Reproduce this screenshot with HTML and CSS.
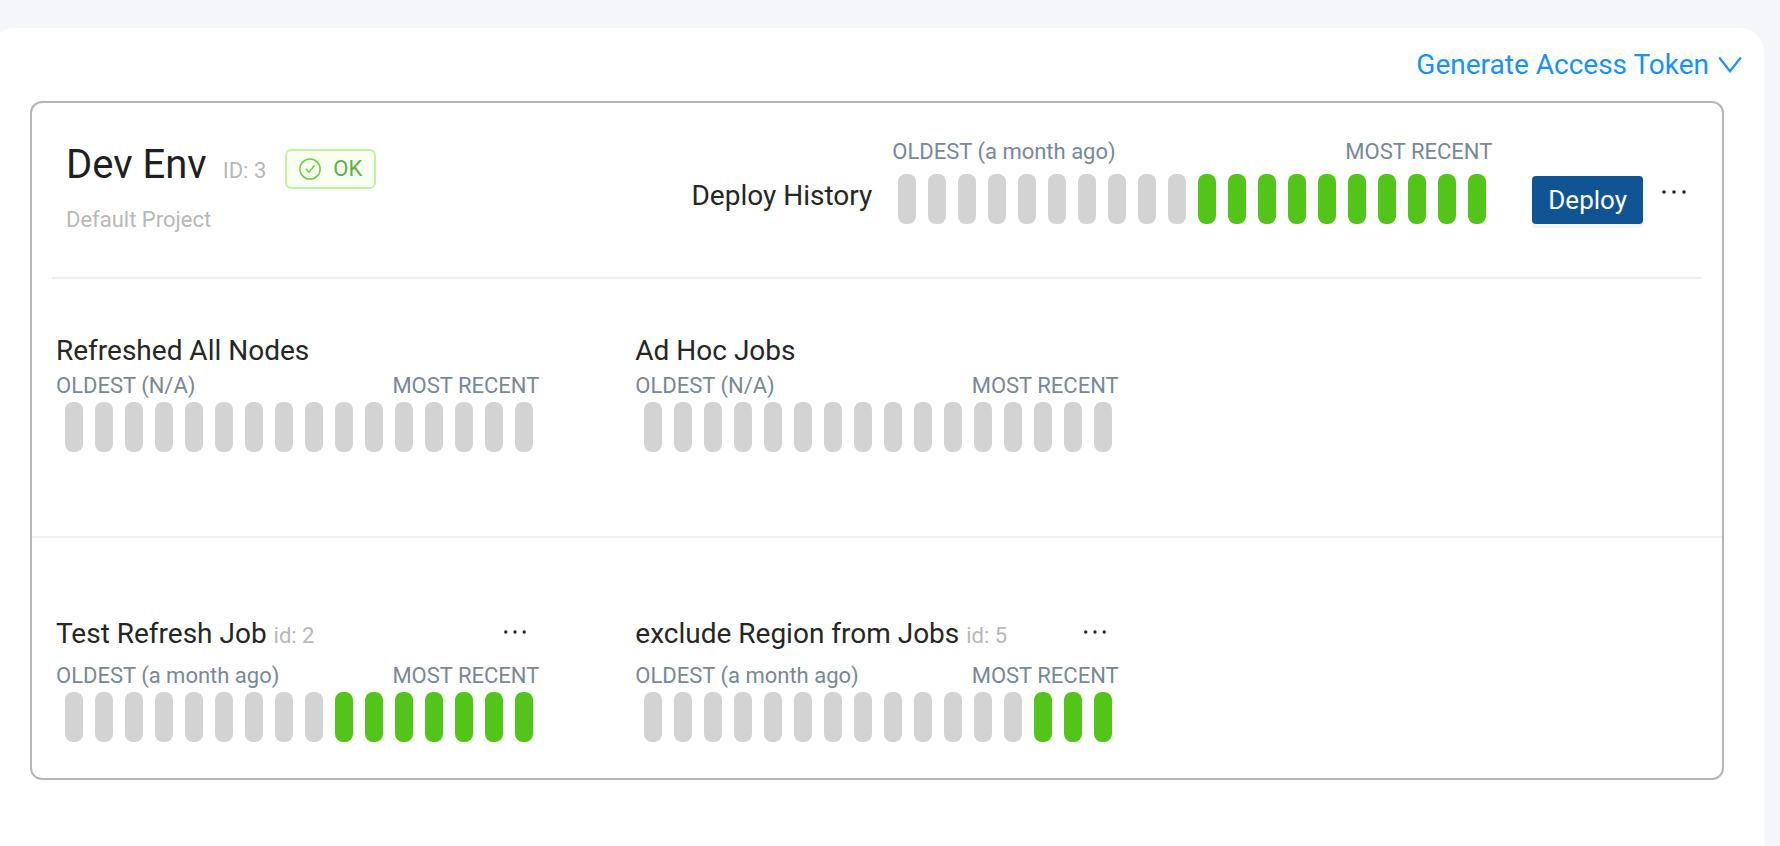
FILE: index.html
```html
<!DOCTYPE html>
<html lang="en">
<head>
<meta charset="utf-8">
<title>Environments</title>
<link rel="stylesheet" href="styles.css">
</head>
<body>
<main class="panel">
  <div class="toolbar">
    <button class="link-button" type="button">Generate Access Token
      <svg class="chevron" viewBox="0 0 24 16" aria-hidden="true"><path d="M1.2 0.5 12 14.2 22.8 0.5" /></svg>
    </button>
  </div>

  <section class="card">
    <header class="card-header">
      <div class="env">
        <div class="env-line">
          <div class="env-heading">
            <h1 class="env-name">Dev Env</h1>
            <span class="muted">ID: 3</span>
          </div>
          <span class="tag">
            <svg class="tag-icon" viewBox="0 0 22 22" aria-hidden="true"><circle cx="11" cy="11" r="10.1" /><path d="M6.9 10.7 10 14.4 15.4 7.2" /></svg>
            OK
          </span>
        </div>
        <p class="muted env-project">Default Project</p>
      </div>
      <div class="deploy">
        <h2 class="title deploy-title">Deploy History</h2>
        <div class="chart chart-wide">
          <div class="labels"><span>OLDEST (a month ago)</span><span>MOST RECENT</span></div>
          <div class="bars"><i></i><i></i><i></i><i></i><i></i><i></i><i></i><i></i><i></i><i></i><i class="ok"></i><i class="ok"></i><i class="ok"></i><i class="ok"></i><i class="ok"></i><i class="ok"></i><i class="ok"></i><i class="ok"></i><i class="ok"></i><i class="ok"></i></div>
        </div>
        <button class="primary" type="button">Deploy</button>
        <button class="more" type="button" aria-label="Environment actions"><svg viewBox="0 0 26 6" aria-hidden="true"><circle cx="3" cy="3" r="1.8" /><circle cx="13" cy="3" r="1.8" /><circle cx="23" cy="3" r="1.8" /></svg></button>
      </div>
    </header>

    <div class="jobs jobs-summary">
      <article class="job">
        <h2 class="title">Refreshed All Nodes</h2>
        <div class="chart">
          <div class="labels"><span>OLDEST (N/A)</span><span>MOST RECENT</span></div>
          <div class="bars"><i></i><i></i><i></i><i></i><i></i><i></i><i></i><i></i><i></i><i></i><i></i><i></i><i></i><i></i><i></i><i></i></div>
        </div>
      </article>
      <article class="job">
        <h2 class="title">Ad Hoc Jobs</h2>
        <div class="chart">
          <div class="labels"><span>OLDEST (N/A)</span><span>MOST RECENT</span></div>
          <div class="bars"><i></i><i></i><i></i><i></i><i></i><i></i><i></i><i></i><i></i><i></i><i></i><i></i><i></i><i></i><i></i><i></i></div>
        </div>
      </article>
    </div>

    <div class="jobs jobs-list">
      <article class="job">
        <div class="job-head">
          <h2 class="title">Test Refresh Job <span class="muted">id: 2</span></h2>
          <button class="more" type="button" aria-label="Test Refresh Job actions"><svg viewBox="0 0 26 6" aria-hidden="true"><circle cx="3" cy="3" r="1.8" /><circle cx="13" cy="3" r="1.8" /><circle cx="23" cy="3" r="1.8" /></svg></button>
        </div>
        <div class="chart">
          <div class="labels"><span>OLDEST (a month ago)</span><span>MOST RECENT</span></div>
          <div class="bars"><i></i><i></i><i></i><i></i><i></i><i></i><i></i><i></i><i></i><i class="ok"></i><i class="ok"></i><i class="ok"></i><i class="ok"></i><i class="ok"></i><i class="ok"></i><i class="ok"></i></div>
        </div>
      </article>
      <article class="job">
        <div class="job-head">
          <h2 class="title">exclude Region from Jobs <span class="muted">id: 5</span></h2>
          <button class="more" type="button" aria-label="exclude Region from Jobs actions"><svg viewBox="0 0 26 6" aria-hidden="true"><circle cx="3" cy="3" r="1.8" /><circle cx="13" cy="3" r="1.8" /><circle cx="23" cy="3" r="1.8" /></svg></button>
        </div>
        <div class="chart">
          <div class="labels"><span>OLDEST (a month ago)</span><span>MOST RECENT</span></div>
          <div class="bars"><i></i><i></i><i></i><i></i><i></i><i></i><i></i><i></i><i></i><i></i><i></i><i></i><i></i><i class="ok"></i><i class="ok"></i><i class="ok"></i></div>
        </div>
      </article>
    </div>
  </section>
</main>
</body>
</html>
```
FILE: styles.css
```css
* {
  box-sizing: border-box;
}

body {
  display: flex;
  min-height: 100vh;
  margin: 0;
  padding-top: 28px;
  overflow-x: hidden;
  background: #f4f6fa;
  color: #262626;
  font: 22px/28px Roboto, "Liberation Sans", sans-serif;
}

h1,
h2,
p {
  margin: 0;
  font-weight: 400;
}

button {
  padding: 0;
  border: 0;
  background: none;
  font: inherit;
  cursor: pointer;
}

.panel {
  flex: 1;
  min-width: 0;
  margin: 0 16px 0 -10px;
  padding: 19px 40px 40px;
  border-radius: 24px 24px 0 0;
  background: #fff;
}

.toolbar {
  display: flex;
  justify-content: flex-end;
  margin: 0 -18px 18px 0;
}

.link-button {
  display: flex;
  align-items: center;
  gap: 9px;
  color: #1890ff;
  font-size: 28px;
  line-height: 36px;
}

.chevron {
  width: 24px;
  height: 16px;
  fill: none;
  stroke: currentColor;
  stroke-width: 2.2;
}

.card {
  border: 2px solid #b5b5b5;
  border-radius: 12px;
}

.card-header {
  display: flex;
  justify-content: space-between;
  margin: 0 20px;
  padding: 35px 15px 43px 14px;
  border-bottom: 2px solid #f0f0f0;
}

.env {
  padding-top: 3px;
}

.env-line {
  display: flex;
  align-items: flex-end;
  gap: 19px;
}

.env-heading {
  display: flex;
  align-items: baseline;
  gap: 16px;
}

.env-name {
  color: #1f1f1f;
  font-size: 40px;
  line-height: 48px;
}

.muted {
  color: #b8b8b8;
  font-size: 22px;
}

.tag {
  display: flex;
  align-items: center;
  gap: 12px;
  padding: 4px 12px;
  border: 2px solid #c5f0a4;
  border-radius: 6px;
  background: #f8fff0;
  color: #62ad4a;
}

.tag-icon {
  width: 22px;
  height: 22px;
  fill: none;
  stroke: #6dcf43;
  stroke-width: 1.5;
}

.env-project {
  margin-top: 17px;
}

.title {
  font-size: 28px;
  line-height: 36px;
}

.deploy {
  display: flex;
  align-items: flex-start;
}

.deploy-title {
  margin: 40px 20px 0 0;
}

.chart {
  display: flex;
  flex-direction: column;
  gap: 2px;
}

.chart-wide {
  width: 600px;
  gap: 8px;
}

.labels {
  display: flex;
  justify-content: space-between;
  color: #778899;
}

.bars {
  display: flex;
  gap: 12px;
  padding-left: 9px;
}

.chart-wide .bars {
  padding-left: 6px;
}

.bars i {
  width: 18px;
  height: 50px;
  border-radius: 8px;
  background: #d3d3d3;
}

.bars .ok {
  background: #52c41a;
}

.primary {
  height: 48px;
  margin: 38px 18px 0 40px;
  padding: 0 16px;
  border-radius: 4px;
  background: #115493;
  box-shadow: 0 4px 0 #f4f4f4;
  color: #fff;
  font-size: 26px;
}

.more {
  display: flex;
  align-items: center;
  height: 32px;
}

.more svg {
  width: 26px;
  height: 6px;
  fill: #262626;
}

.deploy .more {
  margin-top: 38px;
}

.jobs {
  display: grid;
  grid-template-columns: repeat(3, 1fr);
  gap: 96px;
  padding: 0 24px;
}

.job {
  display: flex;
  flex-direction: column;
}

.jobs-summary {
  padding-top: 54px;
  padding-bottom: 84px;
  border-bottom: 2px solid #f0f0f0;
}

.jobs-summary .job {
  gap: 3px;
}

.jobs-list {
  padding-top: 78px;
  padding-bottom: 36px;
}

.jobs-list .job {
  gap: 8px;
}

.job-head {
  display: flex;
  justify-content: space-between;
  padding-right: 12px;
}

.job-head .more svg {
  width: 24px;
}
```
